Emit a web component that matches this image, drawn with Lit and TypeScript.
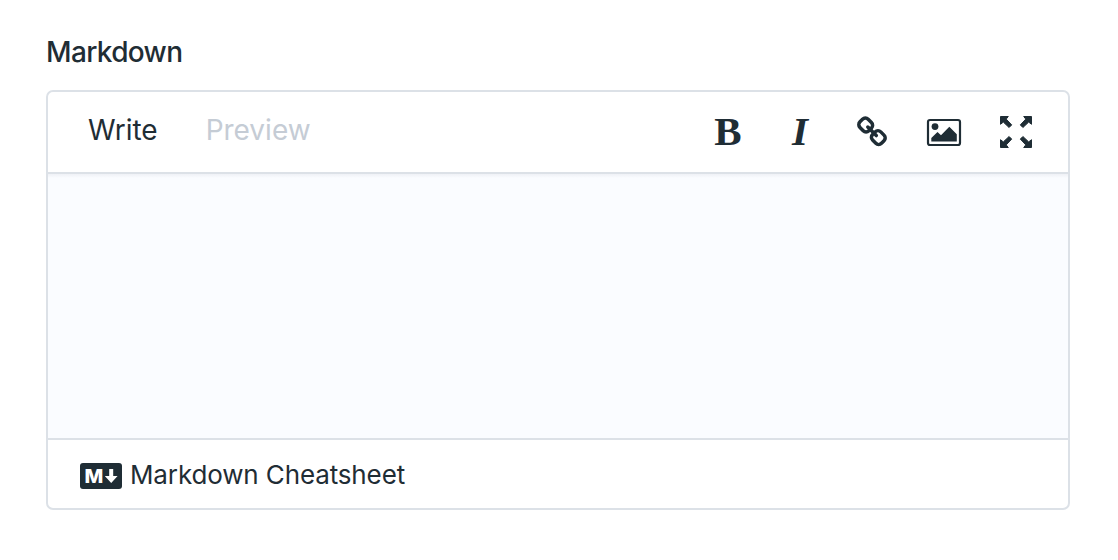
import { LitElement, html, css, svg } from "lit";
import { customElement, property, state } from "lit/decorators.js";

const arrow = "M4.5 4.5H12.3L10.2 7.1L15.7 12.9L13.1 15.5L7.3 10.1L4.5 12.3Z";

const shapes: Record<string, unknown> = {
  link: svg`<g fill="none" stroke="currentColor" stroke-width="3.5">
      <rect x="-6.3" y="-5.8" width="12.6" height="11.6" rx="4" transform="translate(13.7 13) rotate(45)"/>
      <rect x="-6.3" y="-5.8" width="12.6" height="11.6" rx="4" transform="translate(26.3 25.6) rotate(45)"/>
      <path d="M15.8 15.1L24.3 23.6" stroke-linecap="round"/>
    </g>`,
  image: svg`<rect x="4" y="8" width="32" height="25" rx="2" fill="none" stroke="currentColor" stroke-width="2.2"/>
      <circle cx="11" cy="14.6" r="3.4"/>
      <path d="M7.3 29.5V26L13.5 20L17 23.2L25.3 14.7L32.8 22.2V29.5Z"/>`,
  expand: svg`<g stroke="currentColor" stroke-linejoin="round">
      <path d=${arrow}/>
      <path transform="matrix(-1 0 0 1 40 0)" d=${arrow}/>
      <path transform="matrix(1 0 0 -1 0 40)" d=${arrow}/>
      <path transform="matrix(-1 0 0 -1 40 40)" d=${arrow}/>
    </g>`,
};

const tools = ["bold", "italic", "link", "image", "expand"];

@customElement("tool-icon")
class ToolIcon extends LitElement {
  @property() name = "bold";
  static styles = css`
    :host { display: block; width: 40px; }
    svg { display: block; fill: currentColor; }
    .serif { display: block; text-align: center; font: bold 41px/48px "Liberation Serif", serif; margin-top: -5px; }
    .italic { font-style: italic; }
  `;
  render() {
    if (this.name === "bold") return html`<span class="serif">B</span>`;
    if (this.name === "italic") return html`<span class="serif italic">I</span>`;
    return html`<svg width="40" height="40" viewBox="0 0 40 40">${shapes[this.name]}</svg>`;
  }
}

@customElement("app-root")
class AppRoot extends LitElement {
  @state() private tab = "Write";
  static styles = css`
    :host {
      display: block; box-sizing: border-box; height: 560px; padding: 32px 48px 0 46px;
      background: #fff; color: #1f2d35; font-family: Inter, sans-serif;
    }
    .label { height: 40px; line-height: 40px; font-size: 28px; font-weight: 500; letter-spacing: -0.65px; margin-bottom: 18px; }
    .editor { box-sizing: border-box; height: 420px; border: 2px solid #dce1e7; border-radius: 7px; display: flex; flex-direction: column; overflow: hidden; }
    .bar { height: 80px; display: flex; justify-content: space-between; border-bottom: 2px solid #dce1e7; padding: 0 32px 0 40px; }
    .tabs { display: flex; gap: 48px; line-height: 76px; font-size: 28px; }
    .tab { color: #c5ccd5; cursor: pointer; }
    .active { color: #1f2d35; }
    .tools { display: flex; gap: 32px; padding-top: 20px; }
    .area { flex: 1; background: linear-gradient(#eff1f6, #fafcff 4px); }
    .footer { height: 68px; border-top: 2px solid #dce1e7; display: flex; align-items: center; gap: 8px; padding-left: 32px; font-size: 26px; letter-spacing: -0.13px; }
    .mark { display: block; margin-top: 4px; }
    .letter { font: 800 18.5px Inter, sans-serif; letter-spacing: 0; }
  `;
  render() {
    return html`
      <div class="label">Markdown</div>
      <div class="editor">
        <div class="bar">
          <div class="tabs">
            ${["Write", "Preview"].map((t) => html`<span class="tab ${this.tab === t ? "active" : ""}" @click=${() => (this.tab = t)}>${t}</span>`)}
          </div>
          <div class="tools">
            ${tools.map((n) => html`<tool-icon name=${n}></tool-icon>`)}
          </div>
        </div>
        <div class="area"></div>
        <div class="footer">
          <svg class="mark" width="42" height="26" viewBox="0 0 42 26">
            <rect width="42" height="26" rx="3" fill="#1f2d35"/>
            <text class="letter" x="4.6" y="19.7" textLength="18.8" lengthAdjust="spacingAndGlyphs" fill="#fff">M</text>
            <path d="M29.2 6H33.2V13H37.6L31.2 20L24.8 13H29.2Z" fill="#fff"/>
          </svg>
          <span>Markdown Cheatsheet</span>
        </div>
      </div>`;
  }
}
